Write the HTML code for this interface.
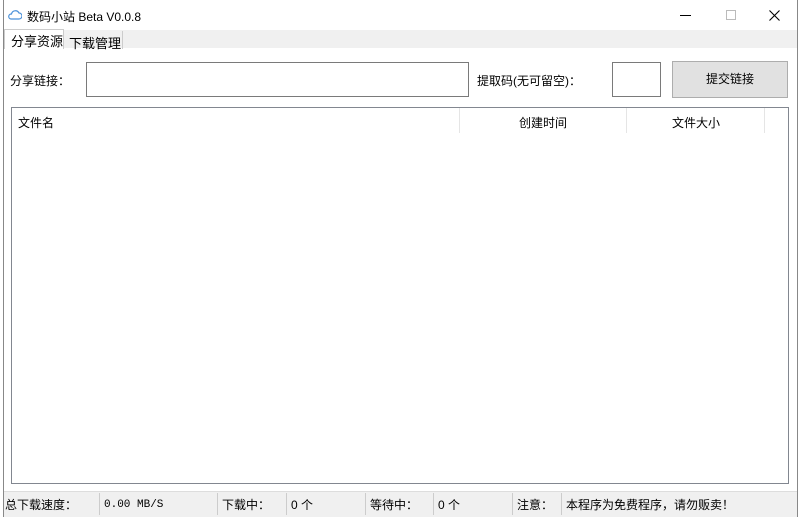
<!DOCTYPE html>
<html><head><meta charset="utf-8"><style>
*{margin:0;padding:0;box-sizing:border-box}
body{width:800px;height:517px;background:#fff;font-family:"Liberation Sans","Noto Sans CJK SC",sans-serif;font-size:12px;color:#000;position:relative;overflow:hidden}
.a{position:absolute}
</style></head><body>
<div class="a" style="left:3px;top:0;width:795px;height:517px;border:1px solid #888;border-top:none;background:#fff"></div>
<div class="a" style="left:4px;top:30px;width:793px;height:18px;background:#f0f0f0"></div>
<svg class="a" style="left:8px;top:9px" width="14" height="12" viewBox="0 0 14 12"><path d="M3 10h8a3 3 0 0 0 0-6 4 4 0 0 0-7.5 1A2.5 2.5 0 0 0 3 10z" fill="none" stroke="#4a90d9" stroke-width="1.2"/></svg>
<div class="a" style="left:27px;top:8px;font-size:12px">数码小站 Beta V0.0.8</div>
<div class="a" style="left:680px;top:15px;width:11px;height:1px;background:#000"></div>
<div class="a" style="left:726px;top:10px;width:10px;height:10px;border:1px solid #bbb"></div>
<svg class="a" style="left:769px;top:10px" width="11" height="11" viewBox="0 0 11 11"><path d="M0.5 0.5L10.5 10.5M10.5 0.5L0.5 10.5" stroke="#000" stroke-width="1.1"/></svg>
<div class="a" style="left:4px;top:29px;width:60px;height:20px;background:#fff;border:1px solid #ccc;border-bottom:none"></div>
<div class="a" style="left:11px;top:31px;font-size:13px">分享资源</div>
<div class="a" style="left:64px;top:31px;width:59px;height:18px;border-right:1px solid #ccc"></div>
<div class="a" style="left:69px;top:33px;font-size:13px">下载管理</div>
<div class="a" style="left:10px;top:72px">分享链接：</div>
<div class="a" style="left:86px;top:62px;width:383px;height:35px;border:1px solid #7a7a7a;background:#fff"></div>
<div class="a" style="left:477px;top:72px">提取码(无可留空)：</div>
<div class="a" style="left:612px;top:62px;width:49px;height:35px;border:1px solid #7a7a7a"></div>
<div class="a" style="left:672px;top:61px;width:116px;height:37px;border:1px solid #adadad;background:#e1e1e1;text-align:center;line-height:35px">提交链接</div>
<div class="a" style="left:11px;top:107px;width:778px;height:377px;border:1px solid #828790"></div>
<div class="a" style="left:459px;top:108px;width:1px;height:25px;background:#e5e5e5"></div>
<div class="a" style="left:626px;top:108px;width:1px;height:25px;background:#e5e5e5"></div>
<div class="a" style="left:764px;top:108px;width:1px;height:25px;background:#e5e5e5"></div>
<div class="a" style="left:18px;top:114px">文件名</div>
<div class="a" style="left:519px;top:114px">创建时间</div>
<div class="a" style="left:672px;top:114px">文件大小</div>
<div class="a" style="left:4px;top:491px;width:793px;height:26px;background:#f0f0f0;border-top:1px solid #ddd"></div>
<div class="a" style="left:5px;top:496px">总下载速度：</div>
<div class="a" style="left:99px;top:493px;width:1px;height:22px;background:#ccc"></div>
<div class="a" style="left:104px;top:499px;font-family:'Liberation Mono',monospace;font-size:11px">0.00 MB/S</div>
<div class="a" style="left:217px;top:493px;width:1px;height:22px;background:#ccc"></div>
<div class="a" style="left:222px;top:496px">下载中：</div>
<div class="a" style="left:286px;top:493px;width:1px;height:22px;background:#ccc"></div>
<div class="a" style="left:291px;top:496px">0 个</div>
<div class="a" style="left:365px;top:493px;width:1px;height:22px;background:#ccc"></div>
<div class="a" style="left:370px;top:496px">等待中：</div>
<div class="a" style="left:433px;top:493px;width:1px;height:22px;background:#ccc"></div>
<div class="a" style="left:438px;top:496px">0 个</div>
<div class="a" style="left:512px;top:493px;width:1px;height:22px;background:#ccc"></div>
<div class="a" style="left:517px;top:496px">注意：</div>
<div class="a" style="left:561px;top:493px;width:1px;height:22px;background:#ccc"></div>
<div class="a" style="left:566px;top:496px">本程序为免费程序，请勿贩卖！</div>
</body></html>
